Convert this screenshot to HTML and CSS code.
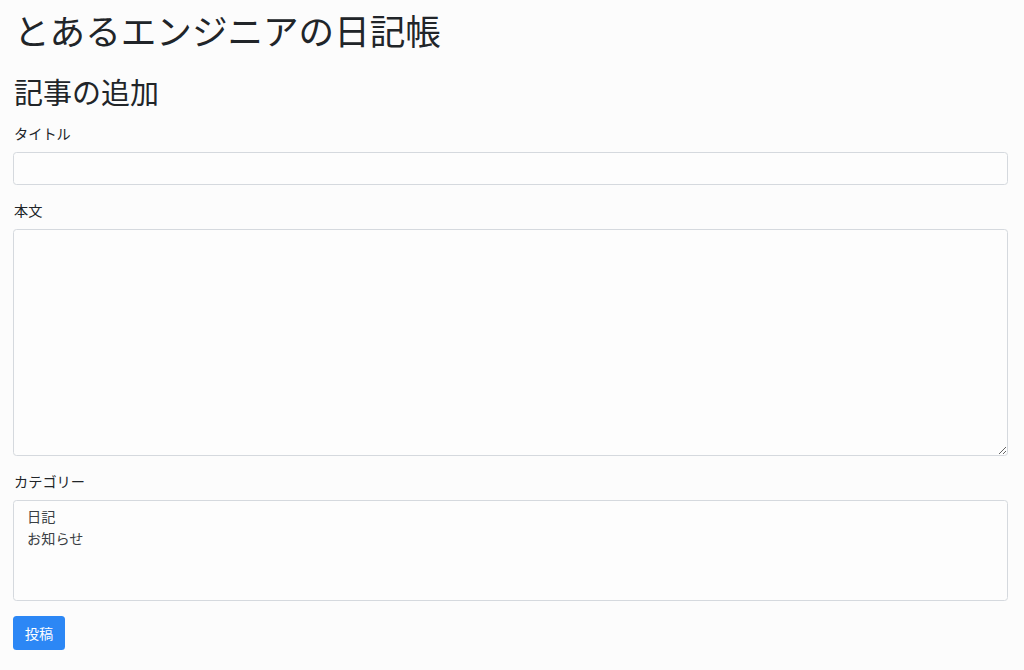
FILE: index.html
```html
<!DOCTYPE html>
<html lang="ja">
<head>
<meta charset="utf-8">
<title>とあるエンジニアの日記帳</title>
<link rel="stylesheet" href="styles.css">
</head>
<body>
<div class="page">
  <h1 class="site-title">とあるエンジニアの日記帳</h1>
  <h2 class="page-title">記事の追加</h2>
  <form class="post-form">
    <div class="form-group">
      <label class="form-label" for="title">タイトル</label>
      <input class="form-control input" id="title" type="text">
    </div>
    <div class="form-group">
      <label class="form-label" for="body">本文</label>
      <textarea class="form-control textarea" id="body"></textarea>
    </div>
    <div class="form-group">
      <label class="form-label" for="category">カテゴリー</label>
      <select class="form-control listbox" id="category" multiple>
        <option>日記</option>
        <option>お知らせ</option>
      </select>
    </div>
    <button class="btn-primary" type="button">投稿</button>
  </form>
</div>
</body>
</html>
```

FILE: styles.css
```css
html, body {
  margin: 0;
  padding: 0;
  background: #fcfcfc;
}

body {
  font-family: "Noto Sans CJK JP", "Noto Sans", sans-serif;
  color: #212529;
  font-size: 14px;
}

.page {
  padding: 9px 16px 0 13px;
}

.site-title {
  margin: 0;
  font-size: 35.6px;
  line-height: 42px;
  font-weight: 400;
  padding-left: 1px;
}

.page-title {
  margin: 23px 0 15px;
  font-size: 29px;
  line-height: 34px;
  font-weight: 400;
  padding-left: 1px;
}

.post-form {
  display: flex;
  flex-direction: column;
  align-items: flex-start;
}

.form-group {
  display: flex;
  flex-direction: column;
  align-self: stretch;
  margin-bottom: 15px;
}

.form-label {
  display: block;
  font-size: 14.2px;
  line-height: 21px;
  margin-bottom: 8px;
  padding-left: 1px;
}

.form-control {
  box-sizing: border-box;
  width: 100%;
  margin: 0;
  border: 1px solid #d5d9de;
  border-radius: 3.5px;
  background: #fdfdfd;
  font-family: inherit;
  font-size: 14.2px;
  color: #495057;
}

.input {
  height: 33px;
  padding: 5px 11px;
}

.textarea {
  height: 227px;
  padding: 5px 11px;
  resize: vertical;
}

.listbox {
  height: 101px;
  padding: 5px 11px;
  overflow: hidden;
}

.listbox option {
  line-height: 22px;
  height: 22px;
  padding: 0 2px;
  color: #3a3f44;
}

.btn-primary {
  height: 34px;
  width: 52px;
  padding: 0;
  border: none;
  border-radius: 3.5px;
  background: #2c87f5;
  color: #ffffff;
  font-family: inherit;
  font-size: 14.2px;
  line-height: 34px;
  text-align: center;
}
```
